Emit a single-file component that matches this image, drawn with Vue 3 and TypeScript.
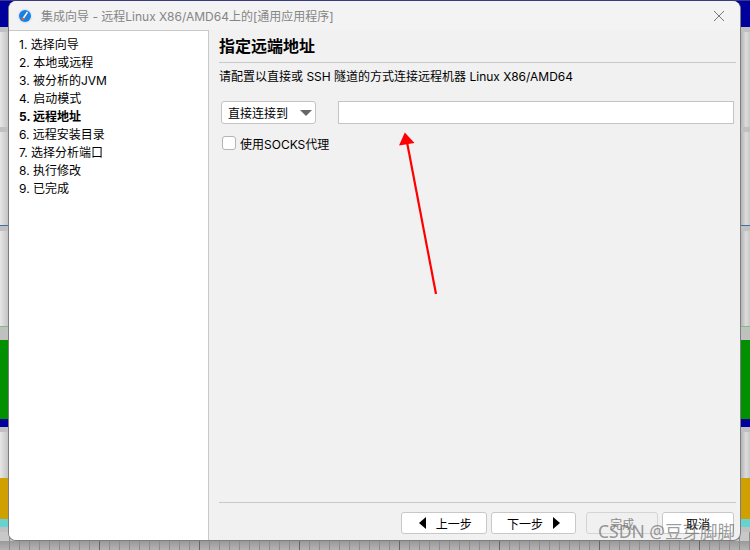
<script setup lang="ts">
const steps = [
  '1. 选择向导',
  '2. 本地或远程',
  '3. 被分析的JVM',
  '4. 启动模式',
  '5. 远程地址',
  '6. 远程安装目录',
  '7. 选择分析端口',
  '8. 执行修改',
  '9. 已完成',
]
const current = 4
</script>

<template>
  <div class="desktop">
    <!-- 背后的窗口色带 -->
    <div class="backdrop">
      <div class="band blue"></div>
      <div class="band dark h5"></div>
      <div class="band light h95"></div>
      <div class="band dark h5"></div>
      <div class="band light h93"></div>
      <div class="band blue-line"></div>
      <div class="band dark h5"></div>
      <div class="band light h95"></div>
      <div class="band green-line"></div>
      <div class="band dark h13"></div>
      <div class="band green"></div>
      <div class="band navy"></div>
      <div class="band dark h5"></div>
      <div class="band light h46"></div>
      <div class="band gold"></div>
      <div class="band cyan"></div>
      <div class="band dark h5"></div>
      <div class="band ticks"></div>
    </div>

    <div class="window">
      <div class="title-bar">
        <svg class="app-icon" width="16" height="16" viewBox="0 0 16 16">
          <circle cx="8" cy="8" r="7.5" fill="#dbe9f7" />
          <circle cx="8" cy="8" r="6" fill="#1c7fe0" />
          <path d="M5.5 11.5 L10.5 4" stroke="#fff" stroke-width="1.4" fill="none" />
          <circle cx="6" cy="11" r="1.3" fill="#e0603a" />
        </svg>
        <span class="title-text">集成向导 - 远程Linux X86/AMD64上的[通用应用程序]</span>
        <svg class="close" width="10" height="10" viewBox="0 0 10 10">
          <path d="M0 0 L10 10 M10 0 L0 10" stroke="#777" stroke-width="1" fill="none" />
        </svg>
      </div>

      <div class="body">
        <ol class="steps">
          <li v-for="(s, i) in steps" :key="s" :class="{ active: i === current }">{{ s }}</li>
        </ol>

        <div class="main">
          <h1 class="heading">指定远端地址</h1>
          <p class="desc">请配置以直接或 SSH 隧道的方式连接远程机器 Linux X86/AMD64</p>

          <div class="address-row">
            <div class="select">
              <span>直接连接到</span>
              <svg width="12" height="6" viewBox="0 0 12 6"><path d="M0 0 H12 L6 6 Z" fill="#666" /></svg>
            </div>
            <div class="input"></div>
          </div>

          <label class="socks">
            <span class="checkbox"></span>
            <span>使用SOCKS代理</span>
          </label>

          <div class="footer">
            <div class="btn prev">
              <svg width="7" height="12" viewBox="0 0 7 12"><path d="M7 0 V12 L0 6 Z" fill="#000" /></svg>
              <span>上一步</span>
            </div>
            <div class="btn next">
              <span>下一步</span>
              <svg width="7" height="12" viewBox="0 0 7 12"><path d="M0 0 V12 L7 6 Z" fill="#000" /></svg>
            </div>
            <div class="btn finish">完成</div>
            <div class="btn cancel">取消</div>
          </div>
        </div>
      </div>
    </div>

    <!-- 标注箭头 -->
    <svg class="arrow" width="750" height="550" viewBox="0 0 750 550">
      <path d="M436 294 L407 142" stroke="#ff0000" stroke-width="2.2" fill="none" />
      <path d="M404.8 132.5 L414.5 143 L399 145.5 Z" fill="#ff0000" />
    </svg>

    <span class="watermark">CSDN @豆芽脚脚</span>
  </div>
</template>

<style>
html,
body {
  margin: 0;
  padding: 0;
  overflow: hidden;
}
</style>

<style scoped>
.desktop {
  position: relative;
  width: 750px;
  height: 550px;
  overflow: hidden;
  font-family: Inter, "Noto Sans CJK SC", sans-serif;
  font-size: 12px;
  color: #000;
}

/* 背景 */
.backdrop {
  display: flex;
  flex-direction: column;
  height: 550px;
}
.band {
  flex: none;
}
.blue {
  height: 27px;
  background: #00009c;
  border-top: 1px solid #3a3a80;
  box-sizing: border-box;
}
.dark {
  background: #c0c0c0;
}
.light {
  background: linear-gradient(90deg, #e6e6e6 0, #c4c4c4 8px, #b4b4b4 741px, #dcdcdc 746px, #c8c8c8 750px);
}
.h5 { height: 5px; }
.h13 { height: 13px; }
.h46 { height: 46px; }
.h93 { height: 93px; }
.h95 { height: 95px; }
.blue-line {
  height: 1px;
  background: #3f6fa5;
}
.green-line {
  height: 1px;
  background: #74c474;
}
.green {
  height: 79px;
  background: #009000;
}
.navy {
  height: 8px;
  background: #00009c;
}
.gold {
  height: 41px;
  background: #d0a000;
}
.cyan {
  height: 8px;
  background: #66d2d2;
}
.ticks {
  flex: 1;
  background:
    repeating-linear-gradient(90deg, transparent 0 99px, #666 99px 100px),
    repeating-linear-gradient(90deg, transparent 0 9px, #8c8c8c 9px 10px),
    linear-gradient(180deg, #c8c8c8 0, #c8c8c8 9px, #999 9px, #b4b4b4 100%);
}

/* 窗口 */
.window {
  position: absolute;
  left: 8px;
  top: 1px;
  width: 733px;
  height: 540px;
  box-sizing: border-box;
  display: flex;
  flex-direction: column;
  background: #f1f1f1;
  border: 1px solid #7d7d7d;
  border-top: none;
  border-radius: 8px;
  overflow: hidden;
}

.title-bar {
  flex: none;
  height: 29px;
  display: flex;
  align-items: center;
  padding: 0 16px 0 8px;
  background: #f3f3f3;
}
.app-icon {
  flex: none;
}
.title-text {
  margin-left: 8px;
  color: #858585;
}
.close {
  margin-left: auto;
}

.body {
  flex: 1;
  display: flex;
  min-height: 0;
}

.steps {
  flex: none;
  width: 189px;
  margin: 0;
  padding: 5px 0 0 10px;
  list-style: none;
  background: #fff;
  border-top: 1px solid #c8c8c8;
  border-right: 1px solid #c8c8c8;
}
.steps li {
  height: 18px;
  line-height: 18px;
}
.steps li.active {
  font-weight: 700;
}

.main {
  flex: 1;
  min-width: 0;
  display: flex;
  flex-direction: column;
  padding: 0 4px 6px 10px;
}
.heading {
  margin: 0;
  height: 32px;
  line-height: 32px;
  font-size: 16px;
  font-weight: 700;
  border-bottom: 1px solid #c8c8c8;
}
.desc {
  margin: 0;
  height: 28px;
  line-height: 28px;
}

.address-row {
  display: flex;
  gap: 22px;
  margin: 10px 2px 0 2px;
}
.select {
  flex: none;
  width: 95px;
  height: 23px;
  box-sizing: border-box;
  display: flex;
  align-items: center;
  justify-content: space-between;
  padding: 0 3px 0 6px;
  background: #fff;
  border: 1px solid #c4c4c4;
  border-radius: 3px;
}
.input {
  flex: 1;
  height: 23px;
  box-sizing: border-box;
  background: #fff;
  border: 1px solid #c4c4c4;
}

.socks {
  display: flex;
  align-items: center;
  gap: 4px;
  margin: 12px 0 0 3px;
  height: 14px;
}
.checkbox {
  width: 14px;
  height: 14px;
  box-sizing: border-box;
  background: #fff;
  border: 1px solid #b4b4b4;
  border-radius: 3px;
}

.footer {
  margin-top: auto;
  padding: 9px 2px 0 182px;
  display: flex;
  border-top: 1px solid #c8c8c8;
}
.btn {
  height: 22px;
  box-sizing: border-box;
  display: flex;
  align-items: center;
  justify-content: center;
  gap: 10px;
  background: #fff;
  border: 1px solid #c8c8c8;
  border-radius: 3px;
}
.prev {
  width: 86px;
  padding-left: 3px;
}
.next {
  width: 86px;
  margin-left: 4px;
}
.finish {
  width: 72px;
  margin-left: 10px;
  background: #f0f0f0;
  border-color: #d4d4d4;
  color: #8a8a8a;
}
.cancel {
  width: 72px;
  margin-left: 4px;
}

.arrow {
  position: absolute;
  left: 0;
  top: 0;
  pointer-events: none;
}

.watermark {
  position: absolute;
  left: 598px;
  top: 518px;
  font-family: "Noto Sans", "Noto Sans CJK SC", sans-serif;
  font-size: 17.5px;
  line-height: 26px;
  white-space: nowrap;
  color: rgba(90, 90, 90, 0.62);
}
</style>
